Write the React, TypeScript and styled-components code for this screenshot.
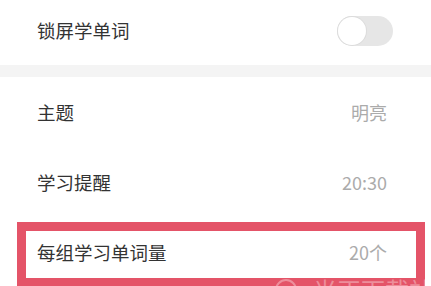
import React from "react";
import styled, { createGlobalStyle } from "styled-components";

const GlobalStyle = createGlobalStyle`
  html, body { margin: 0; padding: 0; background: #ffffff; }
  body { font-family: "Noto Sans CJK SC", "Noto Sans", sans-serif; }
`;

const Page = styled.div`
  position: relative;
  width: 431px;
  height: 286px;
  overflow: hidden;
  background: #ffffff;
  display: flex;
  flex-direction: column;
`;

const Row = styled.div<{ $h: number; $pr: number; $pb?: number }>`
  height: ${(p) => p.$h}px;
  flex: none;
  display: flex;
  align-items: center;
  justify-content: space-between;
  padding: 0 ${(p) => p.$pr}px ${(p) => p.$pb ?? 0}px 37px;
  box-sizing: border-box;
`;

const Label = styled.span`
  font-size: 18.5px;
  color: #333333;
  line-height: 1;
`;

const Value = styled.span`
  font-size: 18px;
  color: #ababab;
  line-height: 1;
`;

const Divider = styled.div`
  height: 12px;
  flex: none;
  background: #f4f4f4;
`;

const Toggle = styled.div`
  width: 56px;
  height: 30px;
  border-radius: 15px;
  background: #e6e6e6;
  position: relative;
  box-sizing: border-box;
`;

const Knob = styled.div`
  position: absolute;
  left: 1px;
  top: 1px;
  width: 28px;
  height: 28px;
  border-radius: 50%;
  background: #ffffff;
  box-shadow: 0 0 0 1px #dcdcdc;
`;

const Highlight = styled.div`
  position: absolute;
  left: 17px;
  top: 222px;
  width: 408px;
  height: 65px;
  border: 9px solid #e45468;
  box-sizing: border-box;
  pointer-events: none;
`;

const Watermark = styled.div`
  position: absolute;
  left: 275px;
  top: 278px;
  display: flex;
  align-items: flex-start;
  gap: 16px;
  color: rgba(255, 255, 255, 0.35);
  font-size: 24px;
  line-height: 1;
  white-space: nowrap;
  pointer-events: none;
`;

const WatermarkRing = styled.div`
  width: 18px;
  height: 18px;
  border-radius: 50%;
  border: 2px solid rgba(255, 255, 255, 0.35);
  margin-top: 1px;
`;

export default function App() {
  return (
    <>
      <GlobalStyle />
      <Page>
        <Row $h={65} $pr={38} $pb={4}>
          <Label>锁屏学单词</Label>
          <Toggle>
            <Knob />
          </Toggle>
        </Row>
        <Divider />
        <Row $h={70} $pr={44}>
          <Label>主题</Label>
          <Value>明亮</Value>
        </Row>
        <Row $h={70} $pr={44}>
          <Label>学习提醒</Label>
          <Value>20:30</Value>
        </Row>
        <Row $h={70} $pr={44}>
          <Label>每组学习单词量</Label>
          <Value>20个</Value>
        </Row>
        <Highlight />
        <Watermark>
          <WatermarkRing />
          <span>光正下载站</span>
        </Watermark>
      </Page>
    </>
  );
}
